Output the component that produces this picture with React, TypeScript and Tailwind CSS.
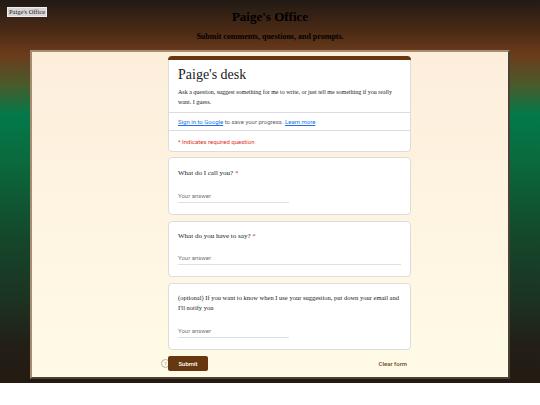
import React from "react";

const serif = { fontFamily: '"Liberation Serif", "Times New Roman", serif' };
const roboto = { fontFamily: 'Roboto, "Liberation Sans", Arial, sans-serif' };

function Card({ children }: { children: React.ReactNode }) {
  return (
    <div className="bg-white border border-[#dadce0] rounded-[4px] px-[9px]">{children}</div>
  );
}

function Answer({ full }: { full?: boolean }) {
  return (
    <div
      className={`text-[6px] leading-[10px] text-[#70757a] border-b border-[#e0e0e0] pb-[1px] ${full ? "w-full" : "w-[111px]"}`}
      style={roboto}
    >
      Your answer
    </div>
  );
}

export default function App() {
  return (
    <div
      className="w-full h-[383px] pt-[7px] bg-[linear-gradient(to_bottom,#211a15_0%,#4a2a15_8%,#6b3b1b_14%,#4b5a2a_22%,#03794a_30%,#0a6a3e_42%,#14472b_62%,#1c3322_78%,#221f17_90%,#241a12_100%)]"
      style={serif}
    >
      <div className="grid grid-cols-[1fr_auto_1fr] items-start h-[20px]">
        <div className="pl-[7px] flex items-start">
          <span className="block bg-[#d9d6d8] border border-[#f0eef0] text-[#1a1a2a] text-[6.5px] leading-[8px] px-[1px]">
            Paige's Office
          </span>
        </div>
        <h1 className="text-[13px] font-bold leading-[20px] text-black text-center">Paige's Office</h1>
        <div />
      </div>
      <p className="mt-[5px] text-[8px] leading-[10px] font-bold text-black text-center">
        Submit comments, questions, and prompts.
      </p>
      <div className="mt-[8px] ml-[30px] w-[480px] h-[329px] border-2 border-t-[#a68c70] border-l-[#a68c70] border-b-[#4a4234] border-r-[#4a4234] bg-[linear-gradient(to_bottom,#fdeedc,#fffbe6)]">
        <div className="ml-[136px] w-[243px] pt-[4px]">
          {/* header card */}
          <div className="rounded-[4px] overflow-hidden">
            <div className="h-[4px] bg-[#673710]" />
            <div className="bg-white border border-t-0 border-[#dadce0] rounded-b-[4px]">
              <div className="px-[9px] pt-[7px] pb-[5px] border-b border-[#dadce0]">
                <div className="text-[14px] leading-[16px] text-[#202124]">Paige's desk</div>
                <div className="mt-[4px] text-[6px] leading-[10px] text-[#202124]">
                  Ask a question, suggest something for me to write, or just tell me something if you really want. I guess.
                </div>
              </div>
              <div className="px-[9px] h-[18px] flex items-center border-b border-[#dadce0] text-[6px] text-[#5f6368]" style={roboto}>
                <span className="text-[#1a73e8] underline">Sign in to Google</span>
                <span>&nbsp;to save your progress.&nbsp;</span>
                <span className="text-[#1a73e8] underline">Learn more</span>
              </div>
              <div className="px-[9px] h-[20px] flex items-center text-[6px] text-[#d93025]" style={roboto}>
                * Indicates required question
              </div>
            </div>
          </div>

          <div className="mt-[5px] flex flex-col gap-[6px]">
            <Card>
              <div className="pt-[10px] pb-[11px]">
                <div className="text-[7px] leading-[10px] text-[#202124]">
                  What do I call you? <span className="text-[#d93025]">*</span>
                </div>
                <div className="mt-[13px]">
                  <Answer />
                </div>
              </div>
            </Card>
            <Card>
              <div className="pt-[9px] pb-[11px]">
                <div className="text-[7px] leading-[10px] text-[#202124]">
                  What do you have to say? <span className="text-[#d93025]">*</span>
                </div>
                <div className="mt-[12px]">
                  <Answer full />
                </div>
              </div>
            </Card>
            <Card>
              <div className="pt-[9px] pb-[11px]">
                <div className="text-[6.5px] leading-[10px] text-[#202124]">
                  (optional) If you want to know when I use your suggestion, put down your email and I'll notify you
                </div>
                <div className="mt-[13px]">
                  <Answer />
                </div>
              </div>
            </Card>
          </div>

          <div className="relative mt-[6px] flex items-center justify-between">
            <div className="absolute left-[-7px] top-[3px] w-[9px] h-[9px] rounded-full border border-[#b8b0a4] flex items-center justify-center text-[6px] leading-none text-[#b0a89c]" style={roboto}>
              ?
            </div>
            <div className="relative h-[15px] w-[40px] bg-[#673710] rounded-[2px] flex items-center justify-center text-white text-[6px] font-medium" style={roboto}>
              Submit
            </div>
            <div className="pr-[4px] text-[6px] font-medium text-[#6b4323]" style={roboto}>
              Clear form
            </div>
          </div>
        </div>
      </div>
    </div>
  );
}
